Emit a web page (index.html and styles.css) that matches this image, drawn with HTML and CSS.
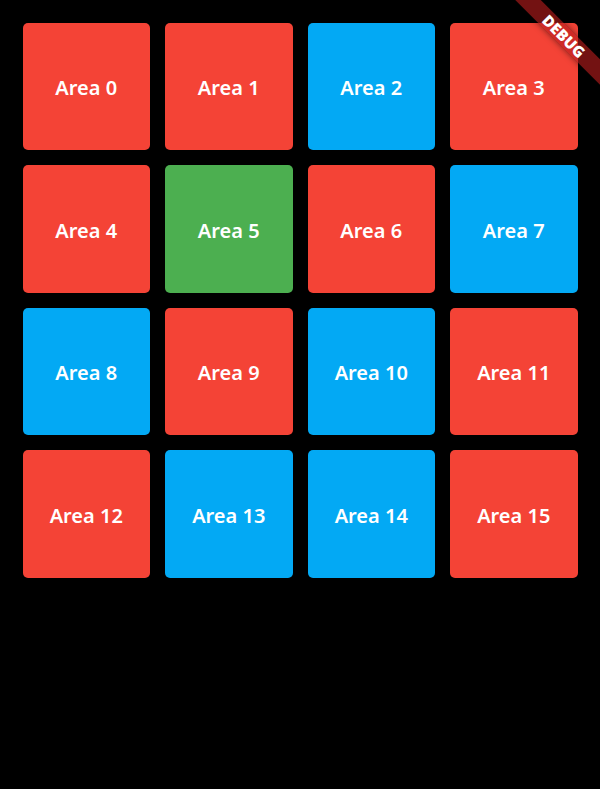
FILE: index.html
```html
<!DOCTYPE html>
<html>
<head>
<meta charset="utf-8">
<link rel="stylesheet" href="styles.css">
</head>
<body>
<div class="app">
  <div class="grid">
    <div class="tile red">Area 0</div>
    <div class="tile red">Area 1</div>
    <div class="tile blue">Area 2</div>
    <div class="tile red">Area 3</div>
    <div class="tile red">Area 4</div>
    <div class="tile green">Area 5</div>
    <div class="tile red">Area 6</div>
    <div class="tile blue">Area 7</div>
    <div class="tile blue">Area 8</div>
    <div class="tile red">Area 9</div>
    <div class="tile blue">Area 10</div>
    <div class="tile red">Area 11</div>
    <div class="tile red">Area 12</div>
    <div class="tile blue">Area 13</div>
    <div class="tile blue">Area 14</div>
    <div class="tile red">Area 15</div>
  </div>
  <div class="banner">DEBUG</div>
</div>
</body>
</html>
```
FILE: styles.css
```css
html, body {
  margin: 0;
  padding: 0;
  background: #000;
  width: 600px;
  height: 789px;
  overflow: hidden;
}
.app {
  position: relative;
  width: 600px;
  height: 789px;
  background: #000;
  font-family: "Noto Sans", "Open Sans", sans-serif;
}
.grid {
  display: grid;
  grid-template-columns: repeat(4, 1fr);
  gap: 15px;
  padding: 22.5px;
}
.tile {
  aspect-ratio: 1 / 1;
  border-radius: 5px;
  display: flex;
  align-items: center;
  justify-content: center;
  padding-top: 3px;
  box-sizing: border-box;
  color: #fff;
  font-size: 20px;
  font-weight: 600;
}
.red { background: #f44336; }
.blue { background: #03a9f4; }
.green { background: #4caf50; }
.banner {
  position: absolute;
  left: 503.94px;
  top: 27.06px;
  width: 120px;
  height: 18px;
  line-height: 18px;
  transform: rotate(45deg);
  background: rgba(183, 28, 28, 0.627);
  box-shadow: 0 0 6px rgba(0, 0, 0, 0.5);
  color: #fff;
  font-size: 15.3px;
  font-weight: 900;
  text-align: center;
}
```
